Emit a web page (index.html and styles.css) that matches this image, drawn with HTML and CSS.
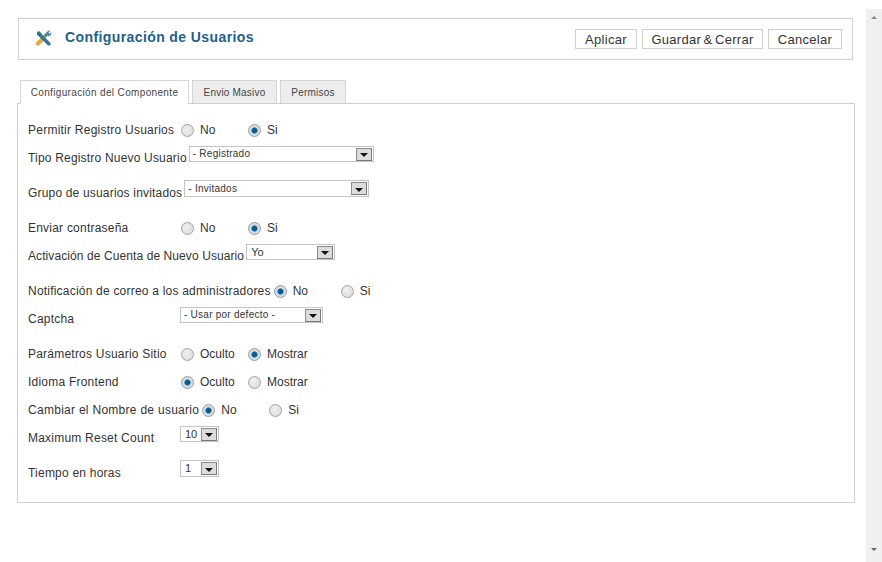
FILE: index.html
```html
<!DOCTYPE html>
<html lang="es">
<head>
<meta charset="utf-8">
<title>Configuración de Usuarios</title>
<link rel="stylesheet" href="styles.css">
</head>
<body>
<div class="page">
  <main class="content">
    <header class="toolbar">
      <svg class="tools" width="17" height="16" viewBox="0 0 17 16" aria-hidden="true">
        <path d="M9 7 L13 3" stroke="#4a87a4" stroke-width="3" fill="none"/>
        <path d="M11.5 4 A3.2 3.2 0 0 1 15.5 .6 L13.6 2.6 L14.6 3.8 L16.4 2.2 A3.4 3.4 0 0 1 12.5 6.2 Z" fill="#4a87a4"/>
        <path d="M3 13.6 L8.6 8" stroke="#e5a93f" stroke-width="4.2" fill="none" stroke-linecap="round"/>
        <path d="M4 4 L13.8 13.8" stroke="#2f7597" stroke-width="3.6" fill="none" stroke-linecap="round"/>
        <path d="M2 2 L4 1 L7 3.8 L4.2 6.6 L2 4.2 Z" fill="#2f7597"/>
      </svg>
      <h1 class="title">Configuración de Usuarios</h1>
      <div class="actions">
        <button class="btn btn-apply">Aplicar</button>
        <button class="btn btn-save">Guardar &amp; Cerrar</button>
        <button class="btn btn-cancel">Cancelar</button>
      </div>
    </header>

    <nav class="tabs">
      <a class="tab tab-active">Configuración del Componente</a>
      <a class="tab tab-mass">Envio Masivo</a>
      <a class="tab tab-perm">Permisos</a>
    </nav>

    <section class="panel">
      <div class="row r1"><span class="lbl">Permitir Registro Usuarios</span>
        <span class="opt"><input type="radio" class="radio" name="a"><span>No</span></span>
        <span class="opt"><input type="radio" class="radio" name="a" checked><span>Si</span></span></div>
      <div class="row row-sel r2"><span class="lbl lbl-auto">Tipo Registro Nuevo Usuario</span>
        <span class="sel sel-reg"><span class="sel-text">- Registrado</span><span class="sel-arrow"></span></span></div>
      <div class="row row-sel r3"><span class="lbl lbl-auto">Grupo de usuarios invitados</span>
        <span class="sel sel-inv"><span class="sel-text">- Invitados</span><span class="sel-arrow"></span></span></div>
      <div class="row r4"><span class="lbl">Enviar contraseña</span>
        <span class="opt"><input type="radio" class="radio" name="b"><span>No</span></span>
        <span class="opt"><input type="radio" class="radio" name="b" checked><span>Si</span></span></div>
      <div class="row row-sel r5"><span class="lbl lbl-auto">Activación de Cuenta de Nuevo Usuario</span>
        <span class="sel sel-yo"><span class="sel-text sel-text-lg">Yo</span><span class="sel-arrow"></span></span></div>
      <div class="row r6"><span class="lbl lbl-auto">Notificación de correo a los administradores</span>
        <span class="opt opt-tight"><input type="radio" class="radio" name="c" checked><span>No</span></span>
        <span class="opt"><input type="radio" class="radio" name="c"><span>Si</span></span></div>
      <div class="row row-sel r7"><span class="lbl">Captcha</span>
        <span class="sel sel-cap"><span class="sel-text">- Usar por defecto -</span><span class="sel-arrow"></span></span></div>
      <div class="row r8"><span class="lbl">Parámetros Usuario Sitio</span>
        <span class="opt"><input type="radio" class="radio" name="d"><span>Oculto</span></span>
        <span class="opt"><input type="radio" class="radio" name="d" checked><span>Mostrar</span></span></div>
      <div class="row r9"><span class="lbl">Idioma Frontend</span>
        <span class="opt"><input type="radio" class="radio" name="e" checked><span>Oculto</span></span>
        <span class="opt"><input type="radio" class="radio" name="e"><span>Mostrar</span></span></div>
      <div class="row r10"><span class="lbl lbl-auto">Cambiar el Nombre de usuario</span>
        <span class="opt opt-tight"><input type="radio" class="radio" name="f" checked><span>No</span></span>
        <span class="opt"><input type="radio" class="radio" name="f"><span>Si</span></span></div>
      <div class="row row-sel r11"><span class="lbl">Maximum Reset Count</span>
        <span class="sel sel-num"><span class="sel-text sel-text-lg">10</span><span class="sel-arrow"></span></span></div>
      <div class="row row-sel r12"><span class="lbl">Tiempo en horas</span>
        <span class="sel sel-num sel-num2"><span class="sel-text sel-text-lg">1</span><span class="sel-arrow"></span></span></div>
    </section>
  </main>
  <aside class="scrollbar">
    <span class="sb-up"></span>
    <span class="sb-down"></span>
  </aside>
</div>
</body>
</html>
```

FILE: styles.css
```css
* { box-sizing: border-box; }
html, body { margin: 0; height: 100%; overflow: hidden; background: #fff; }
body { font-family: "Liberation Sans", Arial, sans-serif; font-size: 12px; color: #333; }

.page { display: flex; height: 562px; width: 882px; }
.content { width: 866px; padding: 18px 11px 0 17px; flex: none; }

.toolbar {
  display: flex; align-items: center;
  margin: 0 2px 0 1px; height: 42px;
  border: 1px solid #d0d0d0;
  padding: 0 10px 0 16px;
}
.tools { flex: none; margin-top: -2px; }
.title { margin: -4px 0 0 13px; font-size: 14px; font-weight: bold; letter-spacing: .4px; color: #1f5f8b; white-space: nowrap; }
.actions { margin-left: auto; display: flex; gap: 5px; }
.btn {
  height: 20px; padding: 0; background: #fff;
  border: 1px solid #cfcfcf; border-radius: 0;
  font: 13px "Liberation Sans", Arial, sans-serif; letter-spacing: .3px; word-spacing: -1.5px; color: #333;
}
.btn-apply { width: 62px; }
.btn-save { width: 121px; }
.btn-cancel { width: 74px; }

.tabs { display: flex; margin: 20px 0 0 3px; gap: 3px; height: 24px; position: relative; z-index: 1; }
.tab {
  height: 23px; line-height: 23px;
  background: #ededed; border: 1px solid #d6d6d6; border-bottom: 0;
  font-size: 10px; letter-spacing: .2px; color: #444; text-align: center;
}
.tab-active { width: 169px; height: 24px; background: #fff; letter-spacing: .35px; }
.tab-mass { width: 85px; }
.tab-perm { width: 66px; }

.panel {
  width: 838px; height: 400px; margin-top: -1px;
  border: 1px solid #cfcfcf;
  padding: 0 0 0 10px;
}

.row { display: flex; align-items: center; white-space: nowrap; height: 14px; letter-spacing: .22px; }
.row-sel { align-items: flex-start; height: 18px; }
.lbl { width: 153px; flex: none; }
.lbl-auto { width: auto; }

.r1 { margin-top: 19px; letter-spacing: .24px; }
.r2 { margin-top: 9px; letter-spacing: .19px; }
.r3 { margin-top: 16px; letter-spacing: .18px; }
.r4 { margin-top: 23px; }
.r5 { margin-top: 9px; letter-spacing: .09px; }
.r6 { margin-top: 22px; letter-spacing: .21px; }
.r7 { margin-top: 9px; }
.r8 { margin-top: 22px; }
.r9 { margin-top: 14px; }
.r10 { margin-top: 14px; letter-spacing: .28px; }
.r11 { margin-top: 9px; }
.r12 { margin-top: 16px; }

.row-sel .lbl { padding-top: 5px; }
.r3 .lbl, .r12 .lbl { padding-top: 6px; }

.opt { width: 67px; display: flex; align-items: center; letter-spacing: 0; }
.opt-tight { margin-left: 3px; }
.radio {
  appearance: none; -webkit-appearance: none;
  width: 13px; height: 13px; margin: 0 6px 0 0; flex: none;
  border: 1px solid #a4a4a4; border-radius: 50%;
  background: radial-gradient(circle at 40% 40%, #f0f0f0 0, #d8d8d8 100%);
}
.radio:checked {
  border-color: #9a9a9a;
  background: radial-gradient(circle at 50% 50%, #0b4f80 0, #14639a 32%, #cfdde8 46%, #e0e0e0 100%);
}

.sel {
  display: flex; align-items: center; justify-content: space-between;
  height: 16px; border: 1px solid #c4c4c4; background: #fff; flex: none;
  padding: 0 1px 0 3px; letter-spacing: 0;
}
.sel-reg { width: 185px; margin-left: 2px; }
.sel-inv { width: 185px; height: 17px; margin-left: 2px; }
.sel-yo { width: 89px; margin-left: 2px; }
.sel-cap { width: 143px; margin-left: -1px; }
.sel-num { width: 39px; margin-left: -1px; }
.sel-num2 { height: 17px; }
.sel-text { font-size: 10px; line-height: 12px; letter-spacing: .25px; color: #333; }
.sel-text-lg { font-size: 11px; letter-spacing: 0; margin-left: 1px; margin-top: -1px; }
.sel-arrow {
  display: flex; align-items: center; justify-content: center;
  width: 16px; height: 13px; flex: none;
  background: #dcdcdc; border: 1px solid; border-color: #8c8c8c #777 #777 #8c8c8c;
}
.sel-arrow::after {
  content: ""; width: 0; height: 0;
  border-left: 4px solid transparent; border-right: 4px solid transparent;
  border-top: 4px solid #111; margin-top: 2px;
}

.scrollbar {
  width: 16px; flex: none; margin-top: 9px;
  background: #f0f0f0;
  display: flex; flex-direction: column; justify-content: space-between; align-items: center;
  padding: 7px 0 11px;
}
.sb-up, .sb-down { width: 0; height: 0; border-left: 3px solid transparent; border-right: 3px solid transparent; }
.sb-up { border-bottom: 3px solid #888; }
.sb-down { border-top: 3px solid #666; }
```
